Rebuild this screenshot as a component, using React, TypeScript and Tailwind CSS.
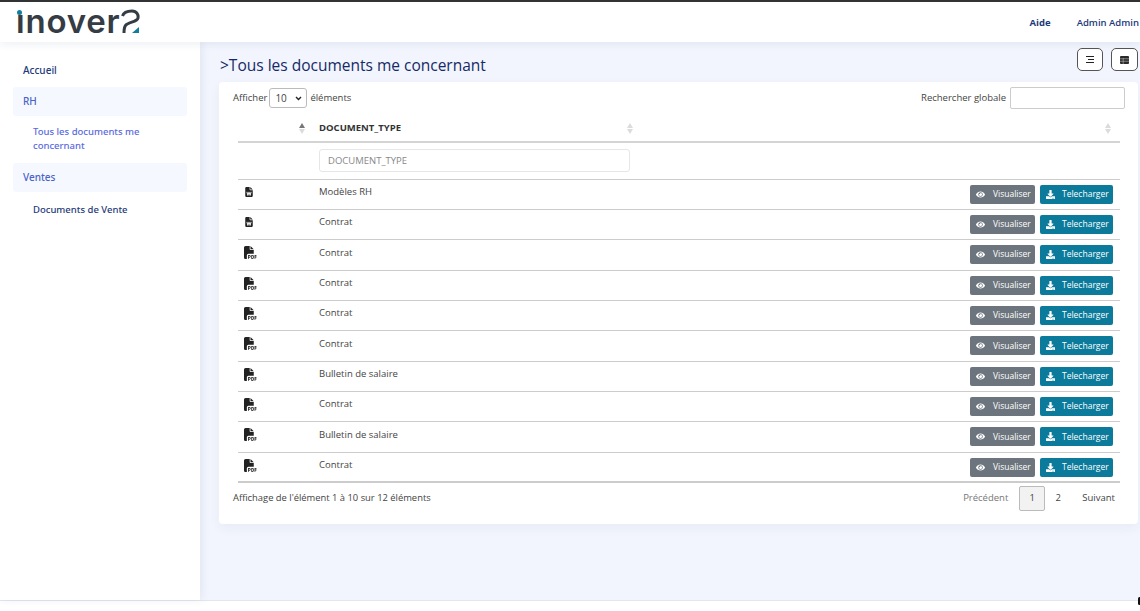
import { FaDownload, FaEye } from 'react-icons/fa'
import { FaFilePdf, FaFileWord } from 'react-icons/fa6'

const rows = [
  { type: 'word', label: 'Modèles RH' },
  { type: 'word', label: 'Contrat' },
  { type: 'pdf', label: 'Contrat' },
  { type: 'pdf', label: 'Contrat' },
  { type: 'pdf', label: 'Contrat' },
  { type: 'pdf', label: 'Contrat' },
  { type: 'pdf', label: 'Bulletin de salaire' },
  { type: 'pdf', label: 'Contrat' },
  { type: 'pdf', label: 'Bulletin de salaire' },
  { type: 'pdf', label: 'Contrat' },
]

function SortArrows({ active }: { active?: boolean }) {
  return (
    <span className="flex flex-col items-center gap-[1px]">
      <span className={`w-0 h-0 border-x-[3px] border-x-transparent border-b-[5px] ${active ? 'border-b-[#777]' : 'border-b-[#dcdcdc]'}`} />
      <span className="w-0 h-0 border-x-[3px] border-x-transparent border-t-[5px] border-t-[#dcdcdc]" />
    </span>
  )
}

function Logo() {
  return (
    <div className="relative flex items-end h-[34px] ml-[17px] w-[123px]">
      <span className="absolute left-[0px] top-[8px] w-[5px] h-[5px] rounded-full bg-[#0f7f9c]" />
      <span className="font-['Inter',sans-serif] text-[33px] leading-[34px] font-semibold text-[#353c43] tracking-[0.8px] relative top-[2px] -left-[1px]">ınover</span>
      <svg width="23" height="26" viewBox="0 0 23 26" className="absolute left-[100px] top-[6px]">
        <path d="M5.5 8 C7 3 12 3 15 3 C20 3 21.5 7 21 10 C20.5 14 11 14 8.5 17.5 C7 19.5 7 22 7 25" fill="none" stroke="#353c43" strokeWidth="3" />
        <path d="M22 19 L22 25 L15 25 Z" fill="#0f7f9c" />
      </svg>
    </div>
  )
}

export default function App() {
  return (
    <div className="relative h-[611px] w-[1140px] overflow-hidden flex flex-col bg-white font-['Open_Sans',sans-serif] text-[#444]">
      <div className="h-[2px] bg-[#333]" />
      {/* header */}
      <header className="h-[40px] flex items-start justify-between bg-white shadow-[0_2px_8px_rgba(30,50,120,0.08)] relative z-10">
        <Logo />
        <div className="flex items-center h-[40px] text-[9.5px] text-[#1e3a7b] pt-[2px]">
          <span className="font-bold mr-[26px]">Aide</span>
          <span className="font-semibold mr-[1px] whitespace-nowrap">Admin Admin</span>
        </div>
      </header>

      <div className="flex h-[558px]">
        {/* sidebar */}
        <aside className="w-[200px] shrink-0 bg-white px-[13px] shadow-[2px_0_8px_rgba(30,50,120,0.08)] relative font-['Noto_Sans',sans-serif] font-medium text-[9.5px]">
          <div className="h-[45px] pt-[11px] flex items-center pl-[10px] text-[10px] text-[#1e3a7b]">Accueil</div>
          <div className="h-[29px] flex items-center pl-[10px] rounded-[3px] bg-[#f5f8ff] text-[10px] text-[#4a62c8]">RH</div>
          <div className="pl-[20px] pt-[9px] pb-[3px] pr-[20px] text-[#5a6ae0] leading-[14px]">Tous les documents me concernant</div>
          <div className="h-[29px] mt-[7px] flex items-center pl-[10px] rounded-[3px] bg-[#f5f8ff] text-[10px] text-[#4a62c8]">Ventes</div>
          <div className="pl-[20px] pt-[11px] text-[#1e3a7b] leading-[14px]">Documents de Vente</div>
        </aside>

        {/* main */}
        <main className="flex-1 bg-[#f2f5fd] pl-[19px] pr-[2px]">
          <div className="h-[40px] flex items-start justify-between">
            <h1 className="text-[15.5px] leading-[24px] mt-[11px] ml-[1px] text-[#142a66]">&gt;Tous les documents me concernant</h1>
            <div className="flex gap-[8px] mt-[6px]">
              <button className="w-[26px] h-[23px] flex flex-col items-center justify-center gap-[2px] rounded-[5px] border border-[#555] bg-white">
                <span className="block w-[8px] h-[1px] bg-[#222]" />
                <span className="block w-[6px] h-[1px] bg-[#222] ml-[1px]" />
                <span className="block w-[8px] h-[1px] bg-[#222]" />
              </button>
              <button className="w-[27px] h-[23px] flex items-center justify-center rounded-[5px] border border-[#555] bg-white">
                <svg width="9" height="8" viewBox="0 0 9 8">
                  <rect width="9" height="8" rx="1" fill="#2a2a2a" />
                  <path d="M0 2.75 H9 M0 5.25 H9 M3.2 2 V8" stroke="#bbb" strokeWidth="0.6" />
                </svg>
              </button>
            </div>
          </div>

          {/* card */}
          <section className="h-[442px] bg-white rounded-[4px] shadow-[0_4px_12px_rgba(30,50,120,0.05)] pl-[14px] pr-[13px] pt-[5px] text-[9.5px]">
            <div className="flex items-center justify-between h-[22px]">
              <div className="flex items-center gap-[2px]">
                <span>Afficher</span>
                <span className="relative w-[38px] h-[20px] block">
                  <select defaultValue="10" className="w-[38px] h-[20px] appearance-none border border-[#bbb] rounded-[3px] bg-white text-[10px] pl-[5px]">
                    <option value="10">10</option>
                    <option value="25">25</option>
                  </select>
                  <svg width="7" height="5" viewBox="0 0 7 5" className="absolute right-[5px] top-[8px] pointer-events-none">
                    <path d="M1 1 L3.5 3.5 L6 1" fill="none" stroke="#222" strokeWidth="1.4" />
                  </svg>
                </span>
                <span className="ml-[1px]">éléments</span>
              </div>
              <div className="flex items-center gap-[4px]">
                <span>Rechercher globale</span>
                <input className="w-[115px] h-[22px] border border-[#ccc] rounded-[2px] bg-white" />
              </div>
            </div>

            <table className="ml-[5px] w-[882px] mt-[6px] table-fixed border-collapse">
              <thead>
                <tr className="h-[27px] border-b-2 border-[#d4d4d4]">
                  <th className="w-[73px] pr-[6px]">
                    <span className="flex justify-end"><SortArrows active /></span>
                  </th>
                  <th className="w-[327px] pl-[8px] pr-[5px]">
                    <span className="flex items-center justify-between font-bold text-[#333] text-[9.5px]">
                      DOCUMENT_TYPE
                      <SortArrows />
                    </span>
                  </th>
                  <th className="pr-[9px]">
                    <span className="flex justify-end"><SortArrows /></span>
                  </th>
                </tr>
              </thead>
              <tbody>
                <tr className="h-[37px] border-b border-[#ccc]">
                  <td />
                  <td className="pl-[8px] pb-[1px]">
                    <input
                      placeholder="DOCUMENT_TYPE"
                      className="w-[311px] h-[23px] border border-[#e6e6e6] rounded-[3px] px-[8px] text-[9.5px] placeholder:text-[#888]"
                    />
                  </td>
                  <td />
                </tr>
                {rows.map((row, i) => (
                  <tr key={i} className={`h-[30.35px] border-b border-[#ccc] ${i === rows.length - 1 ? 'border-b-2' : ''}`}>
                    <td className="pl-[6px]">
                      {row.type === 'word' ? (
                        <FaFileWord className="w-[8px] h-[10px] text-[#222] ml-[1px] mb-[5px]" />
                      ) : (
                        <span className="block">
                          <FaFilePdf className="w-[13px] h-[13px] text-[#222] mb-[4px]" />
                        </span>
                      )}
                    </td>
                    <td className="pl-[8px] pb-[4px]">{row.label}</td>
                    <td className="pr-[7px]">
                      <div className="flex justify-end gap-[5px] text-[8.5px] text-white">
                        <button className="w-[65px] h-[19px] flex items-center pl-[6px] gap-[8px] rounded-[2px] bg-[#6c757d]">
                          <FaEye size={9} />
                          Visualiser
                        </button>
                        <button className="w-[73px] h-[19px] flex items-center pl-[6px] gap-[7px] rounded-[2px] bg-[#0b7a9b]">
                          <FaDownload size={9} />
                          Telecharger
                        </button>
                      </div>
                    </td>
                  </tr>
                ))}
              </tbody>
            </table>

            <div className="flex items-center justify-between h-[28px] pr-[10px] mt-[1px]">
              <span className="text-[9.4px]">Affichage de l'élément 1 à 10 sur 12 éléments</span>
              <div className="flex items-center">
                <span className="text-[#777] mr-[11px]">Précédent</span>
                <span className="w-[26px] h-[25px] flex items-center justify-center border border-[#bbb] rounded-[2px] bg-[#f2f2f2]">1</span>
                <span className="w-[26px] text-center">2</span>
                <span className="ml-[11px]">Suivant</span>
              </div>
            </div>
          </section>
        </main>
      </div>

      {/* footer */}
      <footer className="h-[11px] bg-white border-t border-[#e3e6ee]" />
      <span className="absolute right-[-1px] top-[597px] w-[3px] h-[8px] rounded-full bg-[#111]" />
    </div>
  )
}
